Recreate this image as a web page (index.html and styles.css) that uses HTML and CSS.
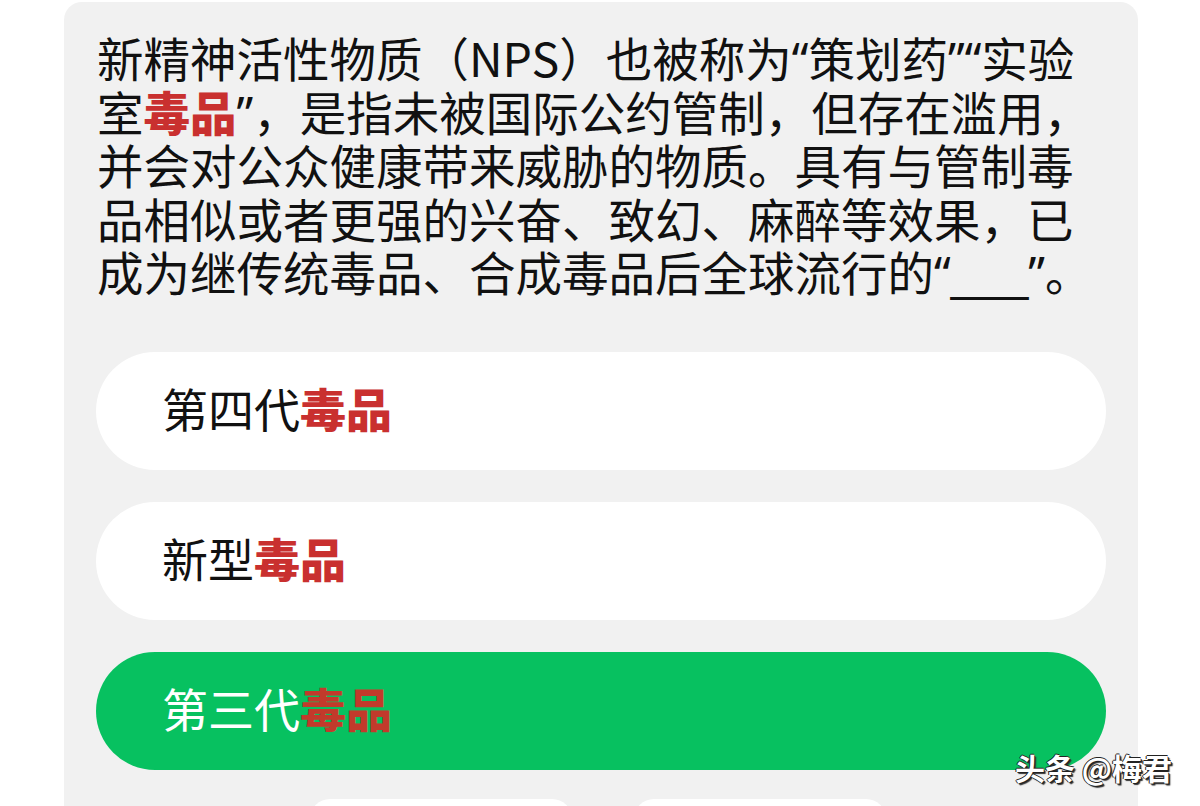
FILE: index.html
```html
<!DOCTYPE html>
<html lang="zh-CN">
<head>
<meta charset="utf-8">
<title>题目</title>
<link rel="stylesheet" href="styles.css">
</head>
<body>
<div class="page">
  <div class="card">
    <div class="question">
      <span class="line">新精神活性物质（NPS）也被称为<span class="q">“</span>策划药<span class="q">”“</span>实验</span>
      <span class="line">室<b class="red">毒品</b><span class="q">”</span>，是指未被国际公约管制，但存在滥用，</span>
      <span class="line">并会对公众健康带来威胁的物质。具有与管制毒</span>
      <span class="line">品相似或者更强的兴奋、致幻、麻醉等效果，已</span>
      <span class="line">成为继传统毒品、合成毒品后全球流行的<span class="q">“</span><span class="blank">___</span><span class="q">”</span>。</span>
    </div>
    <div class="options">
      <div class="option">第四代<b class="red">毒品</b></div>
      <div class="option">新型<b class="red">毒品</b></div>
      <div class="option selected">第三代<b class="red">毒品</b></div>
    </div>
    <div class="actions">
      <div class="action"></div>
      <div class="action"></div>
    </div>
  </div>
  <div class="watermark">头条 @梅君</div>
</div>
</body>
</html>
```

FILE: styles.css
```css
html, body {
  margin: 0;
  padding: 0;
  background: #ffffff;
  overflow: hidden;
}
.page {
  position: relative;
  width: 1200px;
  height: 806px;
  overflow: hidden;
  font-family: "Noto Sans CJK SC", "Noto Sans", sans-serif;
}
.card {
  margin: 2px 0 0 64px;
  width: 1074px;
  box-sizing: border-box;
  padding: 28px 32px 40px 32px;
  background: #f1f1f1;
  border-radius: 18px;
}
.question {
  padding-left: 1px;
  font-size: 46.5px;
  line-height: 53.5px;
  color: #111111;
}
.line {
  display: block;
  height: 53.5px;
  white-space: nowrap;
}
.q {
  font-family: "Noto Sans", "Liberation Sans", sans-serif;
  line-height: 1;
}
.blank {
  font-family: "Liberation Sans", sans-serif;
  line-height: 1;
}
.red {
  color: #c9302f;
  font-weight: 900;
}
.options {
  margin-top: 54px;
  display: flex;
  flex-direction: column;
  gap: 32px;
}
.option {
  height: 118px;
  box-sizing: border-box;
  border-radius: 59px;
  background: #ffffff;
  display: flex;
  align-items: center;
  padding: 0 0 8px 66px;
  font-size: 46px;
  color: #111111;
}
.option.selected {
  background: #07c160;
  color: #ffffff;
}
.option.selected .red {
  color: #c23a2b;
}
.actions {
  margin-top: 29px;
  display: flex;
  gap: 62px;
  padding-left: 214px;
}
.action {
  width: 262px;
  height: 100px;
  background: #ffffff;
  border-radius: 20px;
}
.action + .action {
  width: 252px;
}
.watermark {
  position: absolute;
  left: 1015px;
  top: 748px;
  font-size: 30px;
  line-height: 38px;
  color: #ffffff;
  font-weight: 700;
  text-shadow: 1px 1px 0 #222, -1px 0 0 #222, 0 -1px 0 #222, 2px 2px 1px #333;
}
```
